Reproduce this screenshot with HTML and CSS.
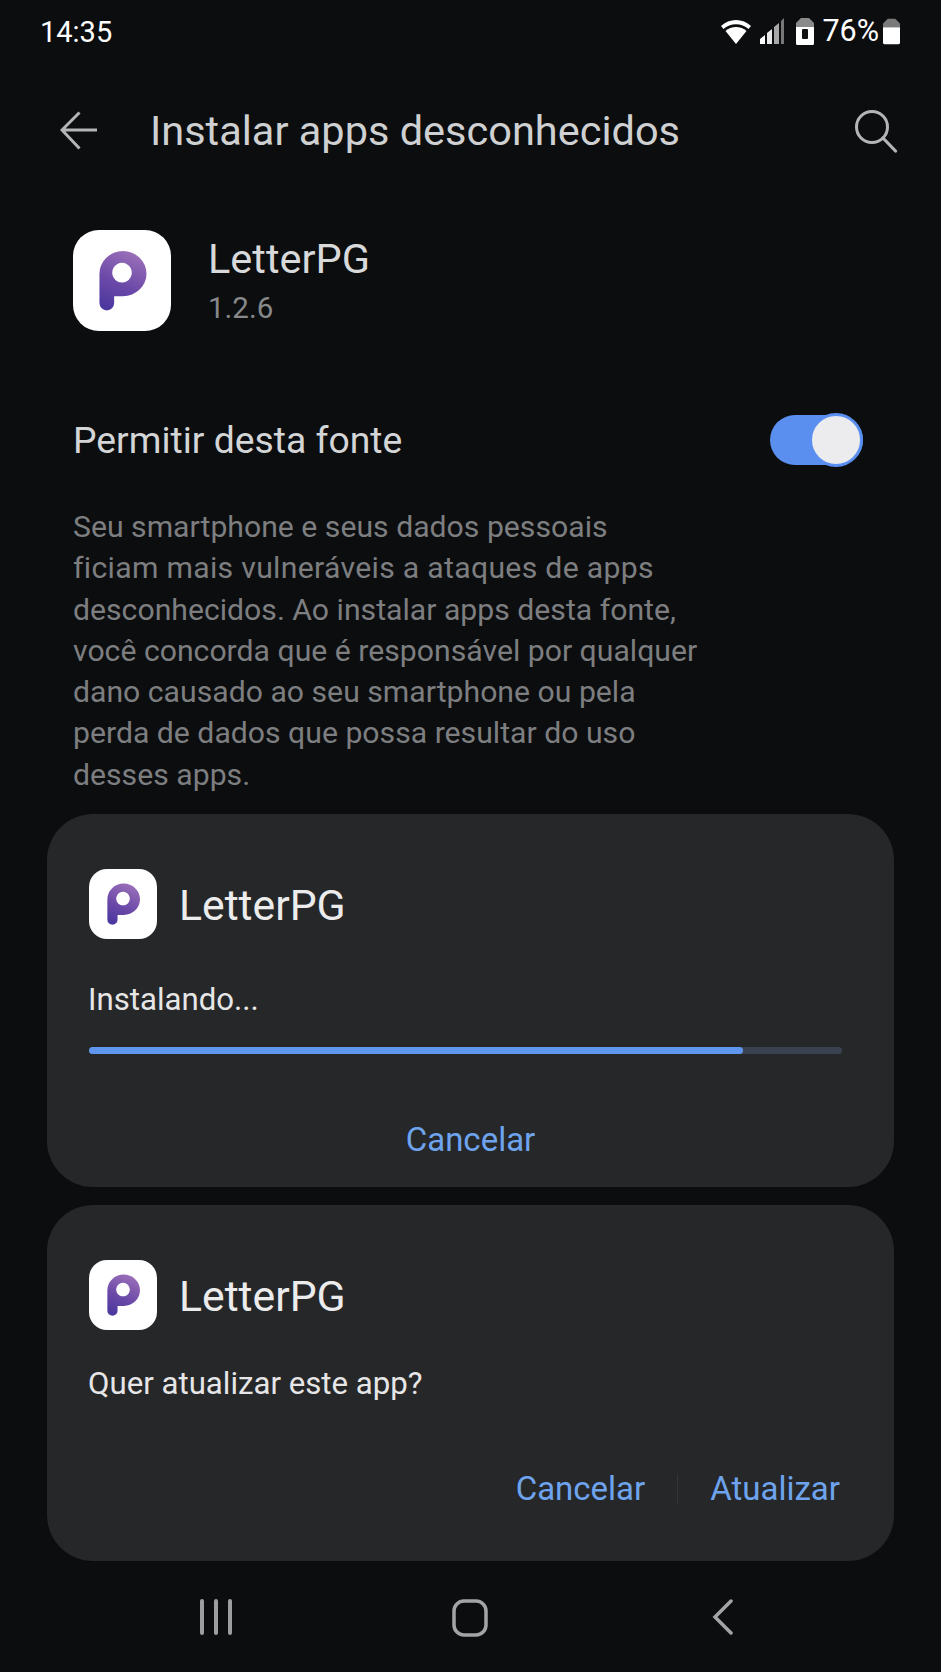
FILE: index.html
```html
<!DOCTYPE html>
<html lang="pt-BR">
<head>
<meta charset="utf-8">
<title>Instalar apps desconhecidos</title>
<link rel="stylesheet" href="styles.css">
</head>
<body>
<svg class="defs" width="0" height="0" aria-hidden="true">
  <defs>
    <linearGradient id="pgrad" x1="0.65" y1="0" x2="0.3" y2="1">
      <stop offset="0" stop-color="#9a6fb9"/>
      <stop offset="0.55" stop-color="#6c4aa8"/>
      <stop offset="1" stop-color="#4c389f"/>
    </linearGradient>
    <symbol id="plogo" viewBox="0 0 100 100">
      <path fill="url(#pgrad)" fill-rule="evenodd" d="M27 43A24 23 0 1 1 51 66H42V73A7.500 7.500 0 0 1 27 73ZM50 32a10 10 0 1 0 .01 0Z"/>
    </symbol>
  </defs>
</svg>
<main class="screen">
  <header class="status">
    <span class="time">14:35</span>
    <div class="status-right">
      <svg class="ic-wifi" viewBox="0 0 32 26"><path d="M1 8C9 0 23 0 31 8l-2.500 3C22 4.500 10 4.500 3.500 11Z" fill="#fff"/><path d="M5.500 13C11 7.500 21 7.500 26.500 13L16 26Z" fill="#fff"/></svg>
      <svg class="ic-signal" viewBox="0 0 25 26"><path d="M0 26V21L5 17V26Z" fill="#fff"/><path d="M7 26V15L12 11V26Z" fill="#e8e8e8"/><path d="M14 26V9L19 5V26Z" fill="#a8a8a8"/><path d="M21 26V3L24 0V26Z" fill="#777"/></svg>
      <svg class="ic-saver" viewBox="0 0 18 27"><path d="M5 0H13L18 5V9H0V5Z" fill="#8a8a8a"/><path d="M0 9H18V25.500Q18 27 16.500 27H1.500Q0 27 0 25.500Z" fill="#fff"/><rect x="6" y="11" width="6" height="10" rx="1" fill="#111"/></svg>
      <span class="pct">76%</span>
      <svg class="ic-batt" viewBox="0 0 18 27"><path d="M5 0H13L18 5V9H0V5Z" fill="#7a7a7a"/><path d="M0 9H18V25.500Q18 27 16.500 27H1.500Q0 27 0 25.500Z" fill="#fff"/></svg>
    </div>
  </header>

  <div class="appbar">
    <svg class="ic-back" viewBox="0 0 38 40"><path d="M37 19H2M19.500 1.500L2 19L19.500 37.500" fill="none" stroke="#b4b5b6" stroke-width="3"/></svg>
    <h1 class="title">Instalar apps desconhecidos</h1>
    <svg class="ic-search" viewBox="0 0 44 44"><circle cx="18" cy="18" r="15.500" fill="none" stroke="#b4b5b6" stroke-width="3"/><path d="M29 29L41.500 42" fill="none" stroke="#b4b5b6" stroke-width="3.200" stroke-linecap="round"/></svg>
  </div>

  <section class="app-row">
    <div class="icon icon-lg"><svg viewBox="0 0 100 100"><use href="#plogo"/></svg></div>
    <div class="app-meta">
      <div class="app-name">LetterPG</div>
      <div class="app-ver">1.2.6</div>
    </div>
  </section>

  <section class="allow-row">
    <span class="allow-label">Permitir desta fonte</span>
    <div class="toggle"><span class="knob"></span></div>
  </section>

  <p class="desc">Seu smartphone e seus dados pessoais<br><span class="desc-wide">ficiam mais vulneráveis a ataques de apps</span><br>desconhecidos. Ao instalar apps desta fonte,<br>você concorda que é responsável por qualquer<br>dano causado ao seu smartphone ou pela<br>perda de dados que possa resultar do uso<br>desses apps.</p>

  <section class="card card-progress">
    <div class="card-head">
      <div class="icon icon-sm"><svg viewBox="0 0 100 100"><use href="#plogo"/></svg></div>
      <span class="card-name">LetterPG</span>
    </div>
    <div class="card-text text-progress">Instalando...</div>
    <div class="bar"><div class="bar-fill"></div></div>
    <div class="actions-center"><span class="action">Cancelar</span></div>
  </section>

  <section class="card card-update">
    <div class="card-head">
      <div class="icon icon-sm"><svg viewBox="0 0 100 100"><use href="#plogo"/></svg></div>
      <span class="card-name">LetterPG</span>
    </div>
    <div class="card-text text-update">Quer atualizar este app?</div>
    <div class="actions-end">
      <span class="action">Cancelar</span>
      <span class="divider"></span>
      <span class="action">Atualizar</span>
    </div>
  </section>

  <nav class="navbar">
    <svg class="ic-recents" viewBox="0 0 34 36"><path d="M3 2V34M17 2V34M31 2V34" fill="none" stroke="#9d9e9f" stroke-width="4" stroke-linecap="round"/></svg>
    <svg class="ic-home" viewBox="0 0 36 38"><rect x="2" y="2" width="32" height="34" rx="10" fill="none" stroke="#a3a4a5" stroke-width="3.500"/></svg>
    <svg class="ic-navback" viewBox="0 0 22 36"><path d="M19 2L3 18L19 34" fill="none" stroke="#a3a4a5" stroke-width="3.500" stroke-linecap="round"/></svg>
  </nav>
</main>
</body>
</html>
```

FILE: styles.css
```css
* { box-sizing: border-box; }
html, body { margin: 0; padding: 0; background: #0c0d0f; }
body { font-family: Roboto, "Noto Sans", sans-serif; }
.defs { display: block; height: 0; }
.screen { width: 941px; height: 1672px; display: flex; flex-direction: column; overflow: hidden; background: #0c0d0f; }

.status { height: 60px; display: flex; align-items: center; justify-content: space-between; padding: 0 41px 0 40px; }
.time { color: #fff; font-size: 29px; line-height: 60px; padding-top: 3px; }
.status-right { display: flex; align-items: center; padding-top: 2px; }
.status-right svg { display: block; }
.ic-wifi { width: 32px; height: 26px; margin-right: 8px; }
.ic-signal { width: 25px; height: 26px; margin-right: 11px; }
.ic-saver { width: 18px; height: 27px; margin-right: 8px; }
.pct { color: #fff; font-size: 30.500px; line-height: 60px; margin-right: 4px; }
.ic-batt { width: 17px; height: 27px; }

.appbar { height: 48px; margin-top: 47px; display: flex; align-items: center; padding: 0 43px 0 60px; }
.ic-back { width: 38px; height: 40px; flex: none; }
.title { flex: 1; margin: 0 0 0 52px; color: #cfd0d1; font-size: 41.500px; font-weight: 400; line-height: 48px; white-space: nowrap; }
.ic-search { width: 44px; height: 44px; flex: none; }

.icon { background: #fff; flex: none; }
.icon svg { display: block; width: 100%; height: 100%; }
.icon-lg { width: 98px; height: 101px; border-radius: 26px; }
.icon-sm { width: 68px; height: 70px; border-radius: 18px; }

.app-row { display: flex; align-items: flex-start; margin-top: 75px; padding-left: 73px; }
.app-meta { margin-left: 37px; }
.app-name { color: #d8d9da; font-size: 41.500px; line-height: 48px; margin-top: 5px; }
.app-ver { color: #87888a; font-size: 29.500px; line-height: 36px; margin-top: 7px; }

.allow-row { display: flex; align-items: center; justify-content: space-between; margin-top: 82px; padding: 0 78px 0 73px; height: 54px; }
.allow-label { color: #d4d5d6; font-size: 37.300px; }
.toggle { width: 93px; height: 50px; border-radius: 25px; background: #5a8ff0; position: relative; }
.knob { position: absolute; right: 0; top: -2px; width: 54px; height: 54px; border-radius: 50%; background: #ececee; border: 3px solid #5a8ff0; }

.desc { margin: 39px 0 0; padding-left: 73px; color: #7d7e80; font-size: 30.200px; line-height: 41.300px; white-space: nowrap; }
.desc-wide { letter-spacing: 0.300px; }

.card { margin-left: 47px; width: 847px; border-radius: 46px; background: #262729; padding: 0 42px; display: flex; flex-direction: column; flex: none; }
.card-progress { height: 373px; margin-top: 19px; }
.card-update { height: 356px; margin-top: 18px; }
.card-head { display: flex; align-items: flex-start; height: 125px; padding-top: 55px; }
.card-name { color: #ececed; font-size: 42.700px; margin-left: 22px; line-height: 70px; padding-top: 1px; }
.card-text { color: #e6e6e7; font-size: 31.200px; line-height: 40px; margin-left: -1px; }
.text-progress { margin-top: 41px; }
.text-update { margin-top: 34px; }
.bar { height: 7px; width: 753px; margin-top: 27px; border-radius: 4px; background: #3a4252; }
.bar-fill { height: 100%; width: 654px; border-radius: 4px; background: #5f97ee; }
.actions-center { margin-top: 66px; display: flex; justify-content: center; }
.action { color: #6ea4ee; font-size: 33px; line-height: 40px; white-space: nowrap; }
.actions-end { margin-top: 65px; display: flex; align-items: center; justify-content: flex-end; padding-right: 12px; }
.divider { width: 1px; height: 30px; background: #333436; margin: 0 32px; }

.navbar { flex: 1; position: relative; }
.ic-recents, .ic-home, .ic-navback { position: absolute; display: block; }
.ic-recents { left: 199px; top: 38px; width: 34px; height: 36px; }
.ic-home { left: 452px; top: 38px; width: 36px; height: 38px; }
.ic-navback { left: 712px; top: 38px; width: 22px; height: 36px; }
```
